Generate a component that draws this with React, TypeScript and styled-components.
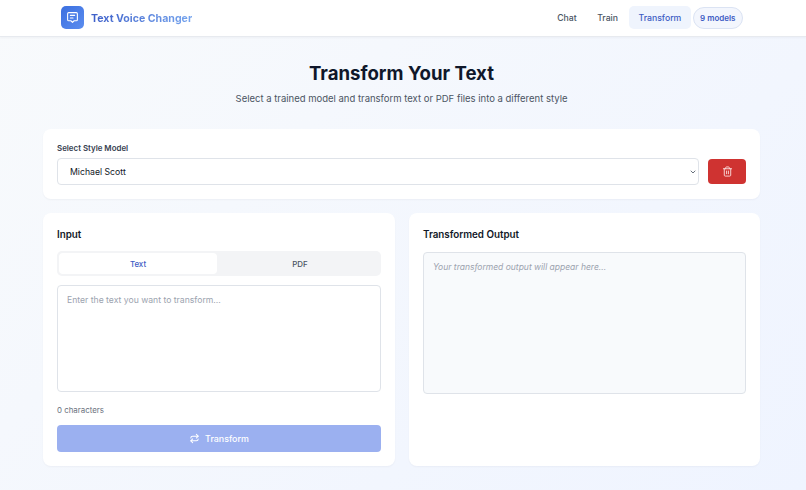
import React from "react";
import styled, { createGlobalStyle } from "styled-components";
import { Trash2, ChevronDown } from "lucide-react";

const Global = createGlobalStyle`
  html, body { margin: 0; padding: 0; }
  body {
    font-family: Inter, "Liberation Sans", sans-serif;
    background: linear-gradient(135deg, #f8fafc 0%, #eff4ff 100%);
    min-height: 490px; color: #0f172a; overflow: hidden;
  }
  * { box-sizing: border-box; }
`;
const Page = styled.div`height: 490px; display: flex; flex-direction: column;`;
const Header = styled.header`
  height: 37px; flex: none; background: #fff; border-bottom: 1px solid #e7eaef;
  box-shadow: 0 1px 2px rgba(15,23,42,.04);
  display: flex; align-items: center; justify-content: space-between; padding: 0 63px 1px 61px;
`;
const Brand = styled.div`display: flex; align-items: center; gap: 7px;`;
const LogoBox = styled.div`
  width: 23px; height: 23px; border-radius: 5px; color: #fff;
  background: linear-gradient(135deg, #3b6fe0, #5b8def);
  display: flex; align-items: center; justify-content: center;
`;
const BrandName = styled.span`
  padding-top: 1px; font-size: 10.6px; font-weight: 700;
  background: linear-gradient(90deg, #3d5fc9, #76a5ee);
  -webkit-background-clip: text; background-clip: text; color: transparent;
`;
const Nav = styled.nav`display: flex; align-items: center; gap: 2px;`;
const NavLink = styled.a<{ $active?: boolean }>`
  height: 23px; padding: 1px 9.25px 0; border-radius: 5px; display: flex; align-items: center;
  font-size: 8.7px; font-weight: 500;
  color: ${p => (p.$active ? "#3d5cc4" : "#4b5563")};
  background: ${p => (p.$active ? "#eff4fd" : "transparent")};
`;
const Badge = styled.span`
  height: 22px; padding: 1px 6.5px 0; border-radius: 11px; display: flex; align-items: center;
  font-size: 8px; font-weight: 600; color: #3d5cc4; background: #f3f6fd; border: 1px solid #dbe3f3;
`;
const Main = styled.main`flex: 1; padding: 0 46px 0 43px; display: flex; flex-direction: column;`;
const Hero = styled.div`
  height: 92px; display: flex; flex-direction: column; align-items: center; padding-top: 24px;
`;
const Title = styled.h1`margin: 0; font-size: 18.6px; line-height: 24px; font-weight: 700; color: #0f172a;`;
const Subtitle = styled.p`margin: 7px 0 0; font-size: 9.5px; line-height: 14px; color: #4b5563;`;
const Card = styled.section`
  background: #fff; border-radius: 8px; box-shadow: 0 1px 2px rgba(15,23,42,.04);
`;
const ModelCard = styled(Card)`height: 70px; padding: 14px; margin-bottom: 14px;`;
const FieldLabel = styled.label`
  display: block; font-size: 7.9px; line-height: 10px; font-weight: 600; color: #374151; margin-bottom: 5px;
`;
const ModelRow = styled.div`display: flex; gap: 9px;`;
const SelectBox = styled.div`
  flex: 1; height: 27px; border: 1px solid #dfe3e9; border-radius: 4px; background: #fff;
  display: flex; align-items: center; justify-content: space-between; padding: 0 1px 0 12px;
  font-size: 8.7px; font-weight: 400; color: #111827;
`;
const DeleteButton = styled.button`
  width: 38px; height: 25px; margin-top: 1px; border: 0; border-radius: 4px; background: #cf3331; color: #fbdede;
  display: flex; align-items: center; justify-content: center; padding: 0;
`;
const Columns = styled.div`display: grid; grid-template-columns: 352px 351px; gap: 14px; flex: none; height: 253px;`;
const Panel = styled(Card)`padding: 14px;`;
const PanelTitle = styled.h2`margin: 1px 0 9px; font-size: 9.8px; line-height: 14px; font-weight: 600; color: #111827;`;
const Tabs = styled.div`
  height: 25px; background: #f3f4f6; border-radius: 5px; padding: 2px; display: grid; grid-template-columns: 1fr 1fr; gap: 4px; margin-bottom: 9px;
`;
const Tab = styled.div<{ $active?: boolean }>`
  border-radius: 4px; display: flex; align-items: center; justify-content: center;
  font-size: 7.9px; font-weight: 500; color: ${p => (p.$active ? "#3d5cc4" : "#4b5563")};
  background: ${p => (p.$active ? "#fff" : "transparent")};
`;
const TextArea = styled.textarea`
  display: block; width: 100%; height: 107px; border: 1px solid #dfe3e9; border-radius: 4px; resize: none; outline: none;
  padding: 8px 9px; font-family: inherit; font-size: 8.65px; line-height: 12px; background: #fff;
  &::placeholder { color: #9ca3af; opacity: 1; }
`;
const CharCount = styled.div`margin-top: 12px; font-size: 7.9px; line-height: 12px; color: #6b7280;`;
const TransformButton = styled.button`
  width: 100%; height: 27px; margin-top: 9px; border: 0; border-radius: 4px; background: #9bb0f0; color: #fff;
  display: flex; align-items: center; justify-content: center; gap: 5px; font-family: inherit; font-size: 8.9px; font-weight: 500;
`;
const Output = styled.div`
  height: 142px; border: 1px solid #dfe3e9; border-radius: 4px; background: #f8fafc; padding: 8px 9px;
  font-size: 8.5px; line-height: 12px; font-style: italic; color: #9ca3af; margin-top: 10px;
`;

const LogoIcon = () => (
  <svg width="13" height="13" viewBox="0 0 24 24" fill="none" stroke="currentColor" strokeWidth="2" strokeLinecap="round" strokeLinejoin="round">
    <path d="M5 3h14a2 2 0 0 1 2 2v11a2 2 0 0 1-2 2h-4l-3 3-3-3H5a2 2 0 0 1-2-2V5a2 2 0 0 1 2-2z" />
    <path d="M8 8h8M8 13h5" />
  </svg>
);
const SwapIcon = () => (
  <svg width="11" height="11" viewBox="0 0 24 24" fill="none" stroke="currentColor" strokeWidth="2.2" strokeLinecap="round" strokeLinejoin="round">
    <path d="M16 3l4 4-4 4" />
    <path d="M20 7H8a4 4 0 0 0-4 4" />
    <path d="M8 21l-4-4 4-4" />
    <path d="M4 17h12a4 4 0 0 0 4-4" />
  </svg>
);

export default function App() {
  return (
    <Page>
      <Global />
      <Header>
        <Brand>
          <LogoBox><LogoIcon /></LogoBox>
          <BrandName>Text Voice Changer</BrandName>
        </Brand>
        <Nav>
          <NavLink>Chat</NavLink>
          <NavLink>Train</NavLink>
          <NavLink $active>Transform</NavLink>
          <Badge>9 models</Badge>
        </Nav>
      </Header>
      <Main>
        <Hero>
          <Title>Transform Your Text</Title>
          <Subtitle>Select a trained model and transform text or PDF files into a different style</Subtitle>
        </Hero>
        <ModelCard>
          <FieldLabel>Select Style Model</FieldLabel>
          <ModelRow>
            <SelectBox>Michael Scott <ChevronDown size={8} strokeWidth={2.5} color="#4b5563" /></SelectBox>
            <DeleteButton aria-label="Delete"><Trash2 size={11} strokeWidth={2} /></DeleteButton>
          </ModelRow>
        </ModelCard>
        <Columns>
          <Panel>
            <PanelTitle>Input</PanelTitle>
            <Tabs>
              <Tab $active>Text</Tab>
              <Tab>PDF</Tab>
            </Tabs>
            <TextArea placeholder="Enter the text you want to transform..." />
            <CharCount>0 characters</CharCount>
            <TransformButton><SwapIcon /> Transform</TransformButton>
          </Panel>
          <Panel>
            <PanelTitle>Transformed Output</PanelTitle>
            <Output>Your transformed output will appear here...</Output>
          </Panel>
        </Columns>
      </Main>
    </Page>
  );
}
